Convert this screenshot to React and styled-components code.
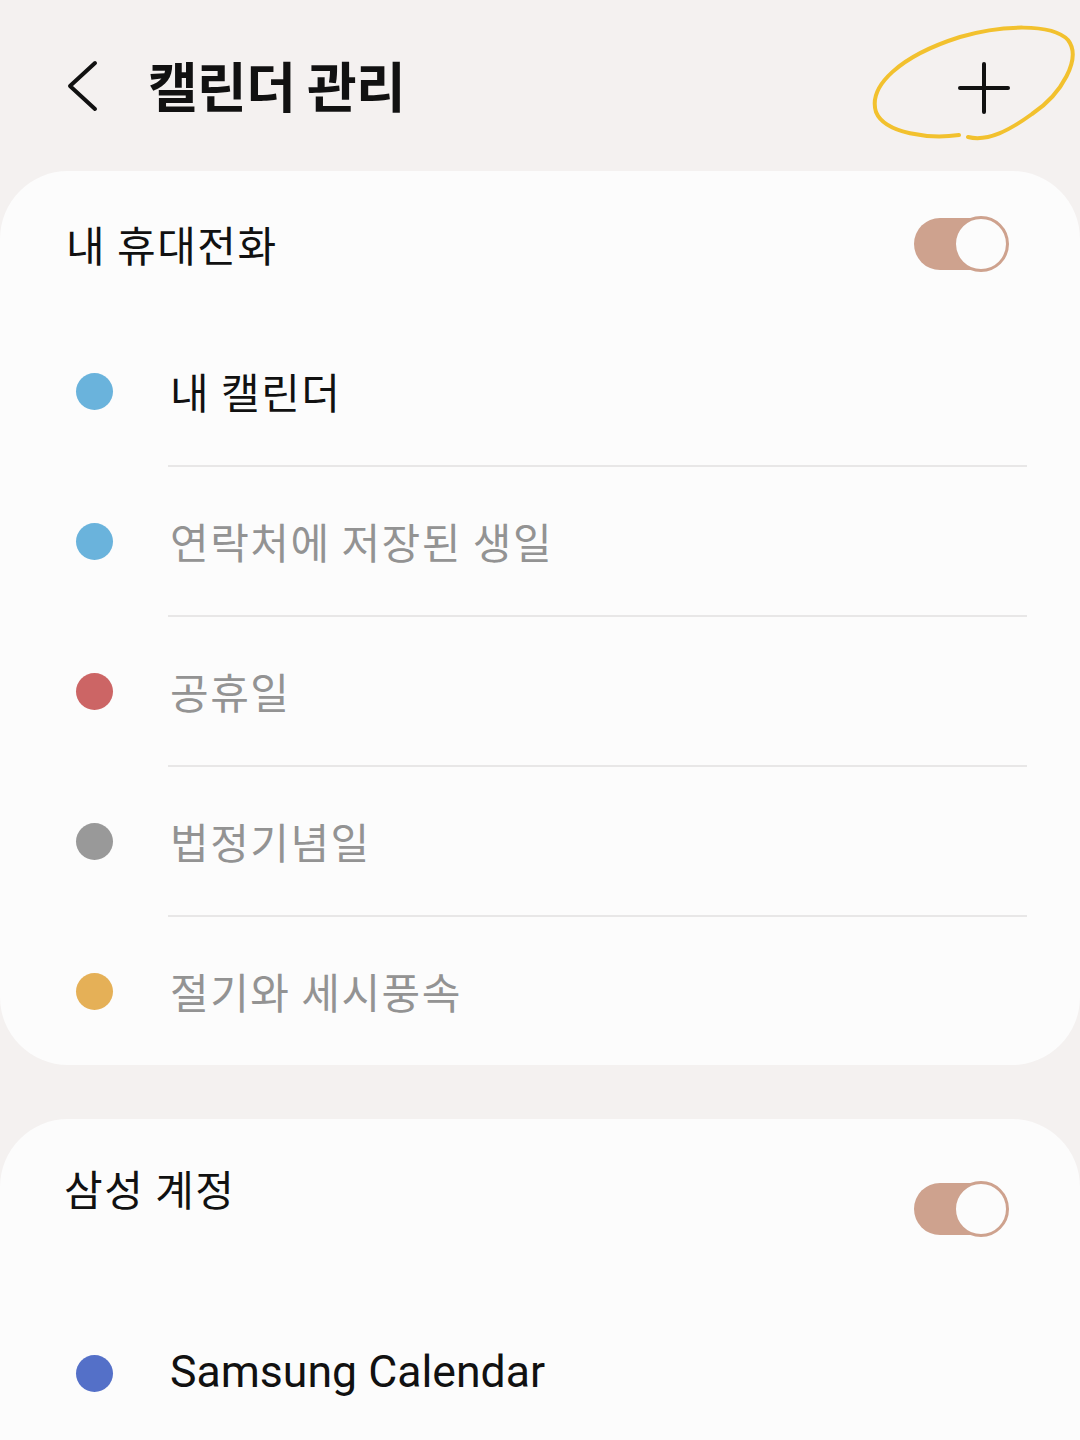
import React from "react";
import styled, { createGlobalStyle } from "styled-components";

const Global = createGlobalStyle`
  html, body { margin: 0; padding: 0; background: #f4f1f0; }
  body { width: 1080px; height: 1440px; overflow: hidden; font-family: "Roboto", "Noto Sans CJK KR", sans-serif; }
`;

const Page = styled.div`
  width: 1080px;
  min-height: 1440px;
  background: #f4f1f0;
  display: flex;
  flex-direction: column;
  position: relative;
`;

const TopBar = styled.header`
  height: 171px;
  display: flex;
  align-items: center;
  padding: 0 70px 0 66px;
  box-sizing: border-box;
  position: relative;
`;

const BackButton = styled.button`
  width: 32px;
  height: 52px;
  border: 0;
  background: none;
  padding: 0;
  margin-right: 50px;
  margin-top: 0;
  display: flex;
`;

const Title = styled.h1`
  margin: 0;
  margin-top: -2px;
  font-family: "Noto Sans CJK KR", sans-serif;
  font-weight: 700;
  font-size: 54px;
  letter-spacing: -0.6px;
  color: #111;
  flex: 1;
`;

const AddButton = styled.button`
  width: 52px;
  height: 52px;
  border: 0;
  background: none;
  padding: 0;
  margin-top: 4px;
  display: flex;
`;

const Scribble = styled.svg`
  position: absolute;
  left: 860px;
  top: 20px;
  width: 220px;
  height: 140px;
  pointer-events: none;
`;

const Cards = styled.div`
  display: flex;
  flex-direction: column;
  gap: 54px;
`;

const Card = styled.section`
  background: #fcfcfc;
  border-radius: ${(p) => (p.$open ? "68px 68px 0 0" : "68px")};
  display: flex;
  flex-direction: column;
  min-height: ${(p) => p.$minHeight || "auto"};
`;

const SectionHeader = styled.div`
  height: ${(p) => p.$height}px;
  display: flex;
  align-items: ${(p) => p.$align};
  justify-content: space-between;
  padding: 0 71px 0 ${(p) => p.$left}px;
  box-sizing: border-box;
`;

const SectionTitle = styled.h2`
  margin: 0;
  margin-top: ${(p) => p.$top || 0}px;
  font-family: "Noto Sans CJK KR", sans-serif;
  font-weight: 400;
  font-size: 42px;
  line-height: 50px;
  letter-spacing: 1.5px;
  color: #111;
`;

const SwitchWrap = styled.div`
  position: relative;
  width: 95px;
  height: 56px;
  margin-top: ${(p) => p.$top || 0}px;
  display: flex;
  align-items: center;
`;

const Track = styled.div`
  width: 90px;
  height: 52px;
  border-radius: 26px;
  background: #cea28e;
`;

const Thumb = styled.div`
  position: absolute;
  right: 0;
  top: 0;
  width: 56px;
  height: 56px;
  box-sizing: border-box;
  border-radius: 50%;
  border: 3px solid #cea28e;
  background: #fcfcfc;
`;

const Row = styled.div`
  height: 148px;
  display: flex;
  align-items: center;
  padding-left: 76px;
`;

const Dot = styled.span`
  width: 37px;
  height: 37px;
  border-radius: 50%;
  background: ${(p) => p.$color};
  flex-shrink: 0;
  margin-right: 57px;
`;

const RowLabel = styled.span`
  font-family: ${(p) => (p.$latin ? '"Roboto", sans-serif' : '"Noto Sans CJK KR", sans-serif')};
  font-size: ${(p) => (p.$latin ? 44.6 : 42)}px;
  letter-spacing: ${(p) => (p.$latin ? "0px" : "1.5px")};
  color: ${(p) => (p.$muted ? "#939393" : "#111")};
  margin-top: -2px;
`;

const Divider = styled.div`
  height: 2px;
  margin: 0 53px 0 168px;
  background: #e8e7e7;
`;

const Switch = ({ top }) => (
  <SwitchWrap $top={top}>
    <Track />
    <Thumb />
  </SwitchWrap>
);

const phoneCalendars = [
  { label: "내 캘린더", color: "#6ab3dc", muted: false },
  { label: "연락처에 저장된 생일", color: "#6ab3dc", muted: true },
  { label: "공휴일", color: "#cc6565", muted: true },
  { label: "법정기념일", color: "#999999", muted: true },
  { label: "절기와 세시풍속", color: "#e5b057", muted: true },
];

export default function App() {
  return (
    <Page>
      <Global />
      <TopBar>
        <BackButton aria-label="뒤로">
          <svg width="32" height="52" viewBox="0 0 32 52" fill="none">
            <polyline points="29,3 4,26 29,49" stroke="#111" strokeWidth="4" strokeLinecap="round" strokeLinejoin="round" />
          </svg>
        </BackButton>
        <Title>캘린더 관리</Title>
        <AddButton aria-label="추가">
          <svg width="52" height="52" viewBox="0 0 52 52" fill="none">
            <line x1="26" y1="2" x2="26" y2="50" stroke="#111" strokeWidth="4" strokeLinecap="round" />
            <line x1="2" y1="26" x2="50" y2="26" stroke="#111" strokeWidth="4" strokeLinecap="round" />
          </svg>
        </AddButton>
        <Scribble viewBox="0 0 220 140" fill="none">
          <path
            d="M99 115 C70 119 25 114 16 92 C8 66 40 36 100 17 C140 5 192 3 208 20 C222 38 202 74 172 94 C150 110 128 122 108 117"
            stroke="#f2c12e"
            strokeWidth="4"
            strokeLinecap="round"
          />
        </Scribble>
      </TopBar>
      <Cards>
        <Card>
          <SectionHeader $height={146} $align="center" $left={66}>
            <SectionTitle>내 휴대전화</SectionTitle>
            <Switch />
          </SectionHeader>
          {phoneCalendars.map((c, i) => (
            <React.Fragment key={c.label}>
              <Row>
                <Dot $color={c.color} />
                <RowLabel $muted={c.muted}>{c.label}</RowLabel>
              </Row>
              {i < phoneCalendars.length - 1 && <Divider />}
            </React.Fragment>
          ))}
        </Card>
        <Card $open $minHeight="400px">
          <SectionHeader $height={180} $align="flex-start" $left={64}>
            <SectionTitle $top={44}>삼성 계정</SectionTitle>
            <Switch top={62} />
          </SectionHeader>
          <Row>
            <Dot $color="#5470c8" />
            <RowLabel $latin>Samsung Calendar</RowLabel>
          </Row>
        </Card>
      </Cards>
    </Page>
  );
}
